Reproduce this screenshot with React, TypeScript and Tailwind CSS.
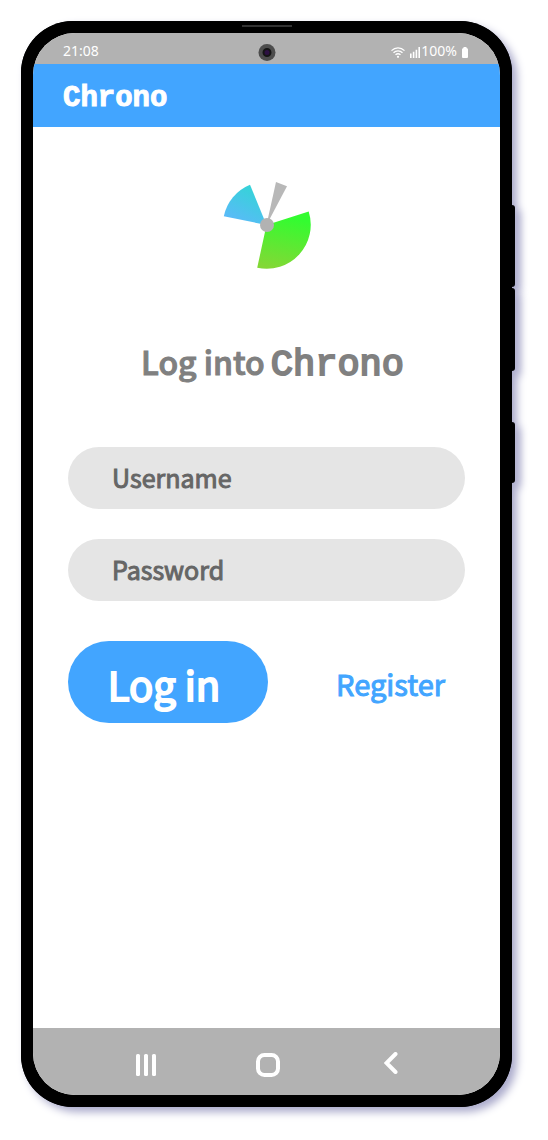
const sans = "font-['Noto_Sans_CJK_SC','Noto_Sans',sans-serif]";
const mono = "font-['Liberation_Mono',monospace]";

function WifiIcon() {
  return (
    <svg width="14" height="11" viewBox="0 0 14 11" fill="none" stroke="white" strokeWidth="1.3" aria-hidden="true">
      <path d="M0.5 3.6C4.2 0 9.8 0 13.5 3.6" />
      <path d="M2.5 5.8C5.1 3.3 8.9 3.3 11.5 5.8" />
      <path d="M4.5 7.8C6 6.5 8 6.5 9.5 7.8" />
      <circle cx="7" cy="9.8" r="1.1" fill="white" stroke="none" />
    </svg>
  );
}

function SignalIcon() {
  return (
    <svg width="10" height="11" viewBox="0 0 10 11" fill="white" aria-hidden="true">
      <path d="M0 6.5h1.6V11H0zM2.8 4.8h1.6V11H2.8zM5.6 2.7h1.6V11H5.6zM8.4 0H10v11H8.4z" />
    </svg>
  );
}

function BatteryIcon() {
  return (
    <svg width="6" height="11" viewBox="0 0 6 11" fill="white" aria-hidden="true">
      <path d="M1.5 0h3v1A1.5 1.5 0 0 1 6 2.5V10a1 1 0 0 1-1 1H1a1 1 0 0 1-1-1V2.5A1.5 1.5 0 0 1 1.5 1z" />
    </svg>
  );
}

function ChronoLogo() {
  return (
    <svg width="88" height="88" viewBox="0 0 88 88" role="img" aria-label="Chrono logo">
      <defs>
        <linearGradient id="blueWedge" x1="0" y1="1" x2="0.55" y2="0">
          <stop offset="0" stopColor="#62b5ff" />
          <stop offset="1" stopColor="#35d3d8" />
        </linearGradient>
        <linearGradient id="greenWedge" x1="0.6" y1="0" x2="0.4" y2="1">
          <stop offset="0.1" stopColor="#33fc30" />
          <stop offset="1" stopColor="#82d835" />
        </linearGradient>
      </defs>
      <path d="M43.5 44L0.8 35.2A43.7 43.7 0 0 1 27 3.7z" fill="url(#blueWedge)" />
      <path d="M43.5 44L85.7 30.6A44 44 0 0 1 34.2 86.8z" fill="url(#greenWedge)" />
      <path d="M43.5 44L53 1L64 5.2z" fill="#b8b8b8" />
      <circle cx="44" cy="44" r="7" fill="#b2b2b2" />
    </svg>
  );
}

function StatusBar() {
  return (
    <div className="flex h-[31px] items-center justify-between bg-[#b2b2b2] pr-8 pl-[30px] pt-1 font-['Noto_Sans','Open_Sans',sans-serif] text-sm text-white">
      <time>21:08</time>
      <div className="flex items-center">
        <span className="pt-1"><WifiIcon /></span>
        <span className="ml-[5px] pt-1"><SignalIcon /></span>
        <span className="ml-px mr-[5px]">100%</span>
        <span className="pt-1"><BatteryIcon /></span>
      </div>
    </div>
  );
}

function Field({ label, type }: { label: string; type: string }) {
  return (
    <input
      type={type}
      aria-label={label}
      placeholder={label}
      className={`${sans} block h-[62px] w-full rounded-full bg-[#e5e5e5] px-11 pb-0.5 text-[25px] font-normal text-[#666] outline-none [-webkit-text-stroke:1px_#666] placeholder:text-[#666] placeholder:opacity-100`}
    />
  );
}

function NavBar() {
  return (
    <nav className="grid h-[67px] grid-cols-3 place-items-center bg-[#b2b2b2] pt-1.5 pr-12 pl-[52px]">
      <button type="button" aria-label="Recent apps">
        <svg width="20" height="22" viewBox="0 0 20 22" fill="white">
          <rect width="4" height="22" rx="1.5" />
          <rect x="8" width="4" height="22" rx="1.5" />
          <rect x="16" width="4" height="22" rx="1.5" />
        </svg>
      </button>
      <button type="button" aria-label="Home">
        <svg width="24" height="24" viewBox="0 0 24 24" fill="none" stroke="white" strokeWidth="4">
          <rect x="2" y="2" width="20" height="20" rx="6.5" />
        </svg>
      </button>
      <button type="button" aria-label="Back" className="pb-1">
        <svg width="14" height="22" viewBox="0 0 14 22" fill="none" stroke="white" strokeWidth="4" strokeLinecap="round">
          <path d="M11.5 2L2.5 11L11.5 20" />
        </svg>
      </button>
    </nav>
  );
}

export default function App() {
  return (
    <div className="flex min-h-screen flex-col bg-white pt-[21px] pr-9 pb-[33px] pl-[21px]">
      <div className="relative flex flex-1 flex-col rounded-[52px] bg-black p-3 shadow-[5px_5px_8px_#aaaacb]">
        <span className="absolute -right-[3px] top-[184px] h-[82px] w-2 rounded-r-[3px] bg-black shadow-[5px_5px_8px_#aaaacb]" />
        <span className="absolute -right-[3px] top-[267px] h-[83px] w-2 rounded-r-[3px] bg-black shadow-[5px_5px_8px_#aaaacb]" />
        <span className="absolute -right-[3px] top-[401px] h-[61px] w-2 rounded-r-[3px] bg-black shadow-[5px_5px_8px_#aaaacb]" />
        <span className="absolute inset-0 rounded-[52px] bg-black" />
        <span className="absolute top-1 left-1/2 h-0.5 w-[50px] -translate-x-1/2 bg-[#333]" />

        <div className="relative flex flex-1 flex-col overflow-hidden rounded-[42px] bg-white">
          <StatusBar />
          <span className="absolute top-[11px] left-1/2 flex size-[17px] -translate-x-1/2 items-center justify-center rounded-full bg-[#4d4d4d]">
            <span className="size-[9px] rounded-full border-2 border-[#151515] bg-[#2c1042]" />
          </span>

          <header className="flex h-[63px] items-center bg-[#42a5ff] pl-[30px] pt-1.5">
            <span className={`${mono} text-[29px] font-bold text-white [-webkit-text-stroke:1px_#fff]`}>Chrono</span>
          </header>

          <main className="flex flex-1 flex-col items-center px-[35px] pt-[54px]">
            <ChronoLogo />
            <h1 className={`${sans} ml-3 mt-[65px] flex h-[54px] items-baseline gap-1.5 whitespace-nowrap text-[32px] leading-[54px] font-medium text-[#808080] [-webkit-text-stroke:1px_#808080]`}>
              <span>Log into</span>
              <span className={`${mono} text-[37px] font-normal [-webkit-text-stroke:2px_#808080]`}>Chrono</span>
            </h1>

            <form className="mt-[59px] flex w-full flex-col gap-[30px]" onSubmit={(e) => e.preventDefault()}>
              <Field label="Username" type="text" />
              <Field label="Password" type="password" />
              <div className="mt-2.5 flex items-center justify-between pr-5">
                <button type="submit" className={`${sans} h-[82px] w-[200px] rounded-full bg-[#42a5ff] pt-1 pr-2 text-[40px] leading-none font-normal text-white [-webkit-text-stroke:2px_#fff]`}>
                  Log in
                </button>
                <a href="#register" className={`${sans} pt-1 text-[29px] font-normal text-[#42a5ff] [-webkit-text-stroke:1px_#42a5ff]`}>Register</a>
              </div>
            </form>
          </main>

          <NavBar />
        </div>
      </div>
    </div>
  );
}
